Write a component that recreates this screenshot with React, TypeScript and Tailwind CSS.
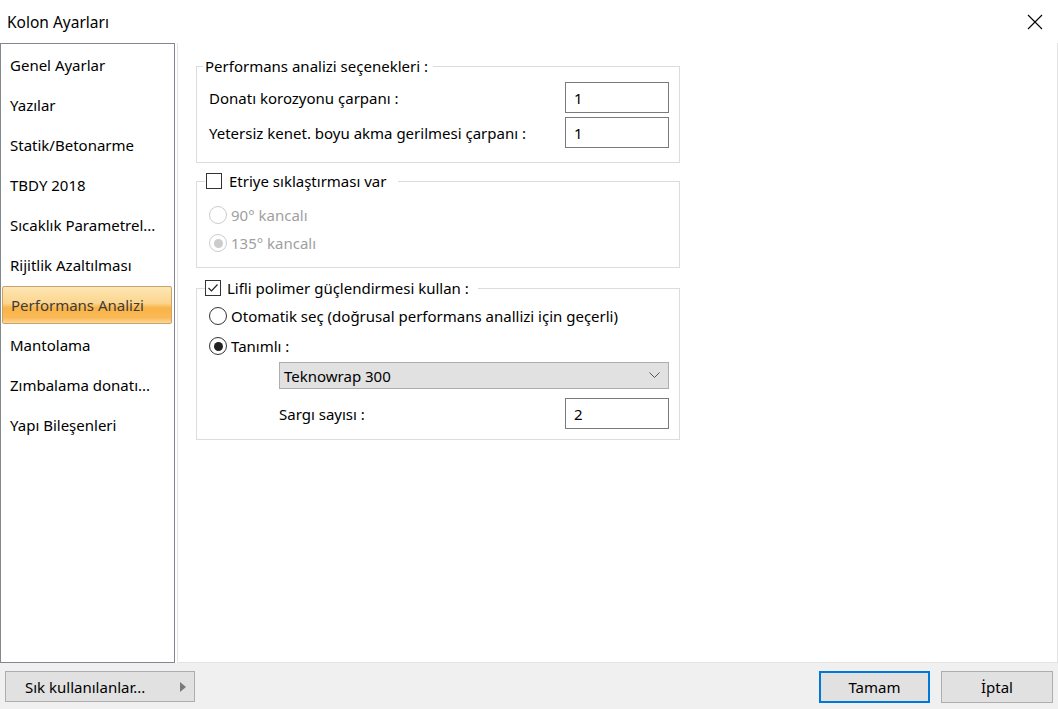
import React from "react";

const menu = [
  "Genel Ayarlar",
  "Yazılar",
  "Statik/Betonarme",
  "TBDY 2018",
  "Sıcaklık Parametrel...",
  "Rijitlik Azaltılması",
  "Performans Analizi",
  "Mantolama",
  "Zımbalama donatı...",
  "Yapı Bileşenleri",
];

function CheckBox({ checked }: { checked?: boolean }) {
  return (
    <span className="w-[16px] h-[16px] border border-[#333333] bg-white flex items-center justify-center shrink-0">
      {checked && (
        <svg width="12" height="12" viewBox="0 0 12 12">
          <polyline points="1.5,6 4.5,9 10.5,2.5" fill="none" stroke="#222" strokeWidth="1.2" />
        </svg>
      )}
    </span>
  );
}

function Radio({ checked, disabled }: { checked?: boolean; disabled?: boolean }) {
  return (
    <span
      className={
        "w-[18px] h-[18px] rounded-full border bg-white flex items-center justify-center shrink-0 " +
        (disabled ? "border-[#cccccc]" : "border-[#333333]")
      }
    >
      {checked && (
        <span className={"w-[9px] h-[9px] rounded-full " + (disabled ? "bg-[#cccccc]" : "bg-[#222222]")} />
      )}
    </span>
  );
}

function NumBox({ value }: { value: string }) {
  return (
    <div className="w-[104px] h-[31px] border border-[#7a7a7a] bg-white flex items-center pl-[8px] text-[15px]">
      {value}
    </div>
  );
}

export default function App() {
  return (
    <div className="w-[1058px] h-[709px] bg-white flex flex-col text-[15px] text-black font-['Noto_Sans',sans-serif] leading-[20px] overflow-hidden">
      {/* title bar */}
      <div className="h-[43px] flex items-center justify-between pl-[7px] pr-[15px] shrink-0">
        <span className="text-[15.5px]">Kolon Ayarları</span>
        <svg width="16" height="16" viewBox="0 0 16 16">
          <path d="M1 1 L15 15 M15 1 L1 15" stroke="#000" strokeWidth="1.1" />
        </svg>
      </div>

      {/* body */}
      <div className="flex h-[620px] shrink-0">
        <nav className="w-[175px] h-full border border-[#828790] bg-white pt-px pl-px pr-[2px] flex flex-col">
          {menu.map((m) =>
            m === "Performans Analizi" ? (
              <div key={m} className="h-[40px] py-px flex">
                <div className="flex-1 flex items-center pl-[8px] rounded-[2px] border border-[#c6a46c] text-[#3c3c3c] bg-[linear-gradient(to_bottom,#fde6b4_0%,#fcd58e_45%,#f9b448_58%,#fab956_85%,#fcd796_100%)]">
                  {m}
                </div>
              </div>
            ) : (
              <div key={m} className="h-[40px] flex items-center pl-[8px]">
                {m}
              </div>
            )
          )}
        </nav>

        <main className="ml-[2px] flex-1 h-full border-l border-r border-b border-[#e3e3e3] bg-white pl-[18px] pt-[13px]">
          {/* performance options */}
          <fieldset className="w-[484px] border border-[#dcdcdc] px-0 pt-[6px] pb-[14px]">
            <legend className="ml-[6px] px-[2px] pr-[5px]">Performans analizi seçenekleri :</legend>
            <div className="flex flex-col gap-[4px] pl-[12px] pr-[10px]">
              <div className="flex items-center justify-between">
                <span>Donatı korozyonu çarpanı :</span>
                <NumBox value="1" />
              </div>
              <div className="flex items-center justify-between">
                <span>Yetersiz kenet. boyu akma gerilmesi çarpanı :</span>
                <NumBox value="1" />
              </div>
            </div>
          </fieldset>

          {/* stirrup densification */}
          <fieldset className="mt-[8px] w-[484px] border border-[#dcdcdc] px-0 pt-[10px] pb-[10px]">
            <legend className="ml-[8px] pl-px pr-[12px]">
              <span className="flex items-center gap-[7px]">
                <CheckBox />
                <span>Etriye sıklaştırması var</span>
              </span>
            </legend>
            <div className="flex flex-col pl-[12px] text-[#a0a0a0]">
              <div className="h-[28px] flex items-center gap-[4px]">
                <Radio disabled />
                <span>90° kancalı</span>
              </div>
              <div className="h-[28px] flex items-center gap-[4px]">
                <Radio checked disabled />
                <span>135° kancalı</span>
              </div>
            </div>
          </fieldset>

          {/* FRP strengthening */}
          <fieldset className="mt-[10px] w-[484px] border border-[#dcdcdc] px-0 pt-[3px] pb-[10px]">
            <legend className="ml-[8px] pr-[9px]">
              <span className="flex items-center gap-[6px]">
                <CheckBox checked />
                <span>Lifli polimer güçlendirmesi kullan :</span>
              </span>
            </legend>
            <div className="flex flex-col pl-[12px] pr-[10px]">
              <div className="h-[30px] flex items-center gap-[4px]">
                <Radio />
                <span>Otomatik seç (doğrusal performans anallizi için geçerli)</span>
              </div>
              <div className="h-[30px] flex items-center gap-[4px]">
                <Radio checked />
                <span>Tanımlı :</span>
              </div>
              <div className="mt-px ml-[70px] h-[27px] border border-[#adadad] bg-[#e1e1e1] flex items-center justify-between pl-[4px] pr-[8px]">
                <span>Teknowrap 300</span>
                <svg width="11" height="7" viewBox="0 0 11 7">
                  <polyline points="0.5,0.5 5.5,5.5 10.5,0.5" fill="none" stroke="#555" strokeWidth="1" />
                </svg>
              </div>
              <div className="mt-[9px] ml-[70px] flex items-center justify-between">
                <span>Sargı sayısı :</span>
                <NumBox value="2" />
              </div>
            </div>
          </fieldset>
        </main>
      </div>

      {/* footer */}
      <div className="flex-1 bg-[#f0f0f0] flex items-start justify-between pt-[8px] pl-[5px] pr-[5px]">
        <div className="w-[190px] h-[31px] border border-[#adadad] bg-[#e1e1e1] flex items-center justify-between pl-[19px] pr-[8px]">
          <span>Sık kullanılanlar...</span>
          <svg width="6" height="10" viewBox="0 0 6 10">
            <polygon points="0,0 6,5 0,10" fill="#7a7a7a" />
          </svg>
        </div>
        <div className="flex gap-[11px]">
          <div className="w-[111px] h-[32px] border-2 border-[#0078d7] bg-[#e1e1e1] flex items-center justify-center">
            Tamam
          </div>
          <div className="w-[112px] h-[32px] border border-[#adadad] bg-[#e1e1e1] flex items-center justify-center">
            İptal
          </div>
        </div>
      </div>
    </div>
  );
}
